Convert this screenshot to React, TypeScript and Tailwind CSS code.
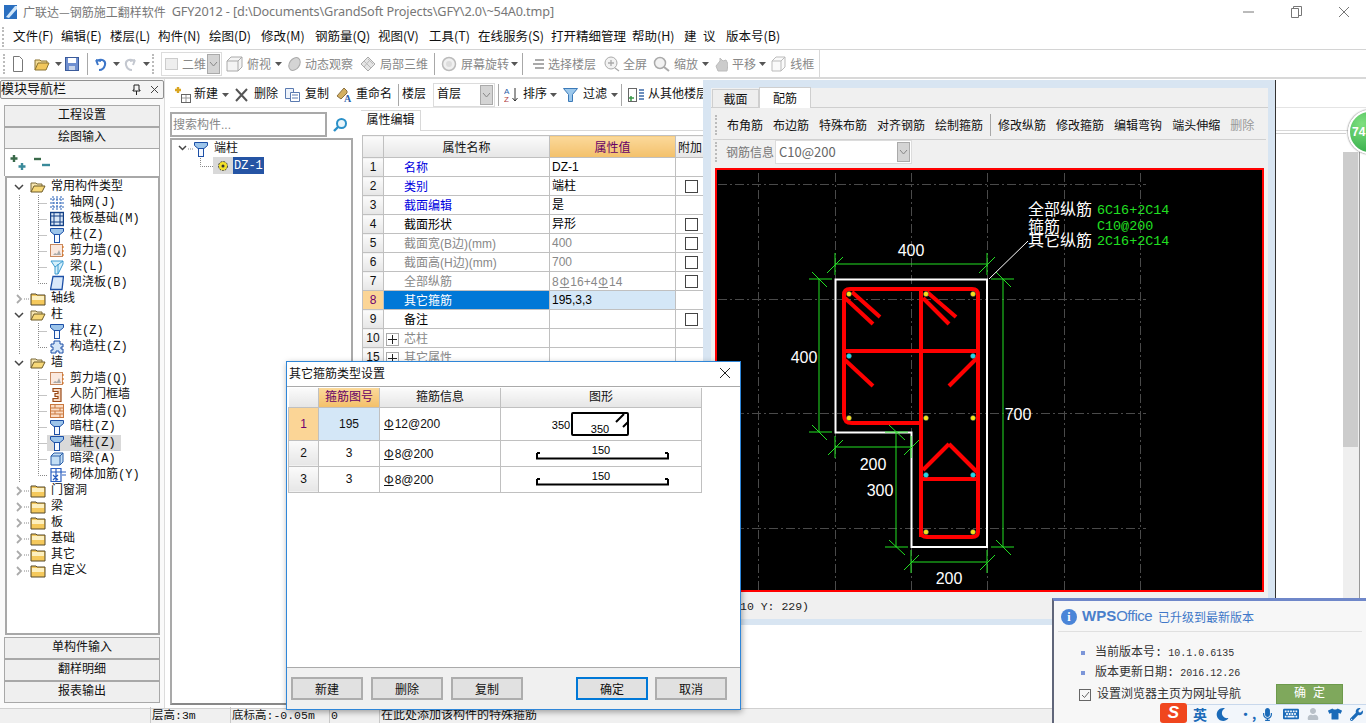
import React from "react";
import { FaMicrophone, FaKeyboard, FaTshirt, FaWrench, FaMoon, FaUser } from "react-icons/fa";

const Caret = ({ className = "" }: { className?: string }) => (
  <svg width="7" height="4" viewBox="0 0 7 4" className={`shrink-0 ${className}`}><path d="M0 0h7L3.5 4z" fill="#555" /></svg>
);
const Div = ({ className = "" }: { className?: string }) => <div className={`w-px h-[22px] bg-[#a8a8a8] shrink-0 ${className}`} />;
const Grip = ({ className = "" }: { className?: string }) => <div className={`w-[2px] h-[20px] shrink-0 border-l-2 border-dotted border-[#bbb] ${className}`} />;
const Txt = ({ className = "", children }: { className?: string; children: React.ReactNode }) => <span className={`shrink-0 whitespace-nowrap ${className}`}>{children}</span>;

const GIcon = ({ w = 16, className = "", children }: { w?: number; className?: string; children: React.ReactNode }) => (
  <svg width={w} height="16" viewBox={`0 0 ${w} 16`} className={`shrink-0 ${className}`}>{children}</svg>
);

const Combo = ({ className = "", w, text, textClass = "", icon }: { className?: string; w: string; text: string; textClass?: string; icon?: React.ReactNode }) => (
  <div className={`${w} h-[24px] shrink-0 flex items-center border border-[#dcdcdc] bg-white pl-[3px] pr-px ${className}`}>
    {icon}
    <span className={`flex-1 whitespace-nowrap ${textClass}`}>{text}</span>
    <div className="w-[13px] h-[20px] bg-[#d4d4d4] border border-[#aaa] flex items-center justify-center">
      <svg width="9" height="6" viewBox="0 0 9 6"><path d="M1 1l3.5 4L8 1" fill="none" stroke="#888" /></svg>
    </div>
  </div>
);

const Column = () => (
  <GIcon w={14}>
    <path d="M.5 1.5h13v3l-3.5 3h-6l-3.5-3z" fill="#9cc4ea" stroke="#1c4fa6" />
    <rect x="4.5" y="7.5" width="5" height="8" fill="#f4f8ff" stroke="#1c4fa6" />
  </GIcon>
);
const FolderOpen = () => (
  <GIcon w={16}>
    <path d="M1 13V4h5l1 1h5v2" fill="#f6e5b0" stroke="#7a6a3a" />
    <path d="M1 13l3-6h11l-3 6z" fill="#f7d878" stroke="#6d5a28" />
  </GIcon>
);
const FolderClosed = () => (
  <GIcon w={16}>
    <path d="M1 14V3h5l1 1h8v10z" fill="#f5c95c" stroke="#55482a" />
    <rect x="2" y="5" width="12" height="4" fill="#fdf0c0" />
  </GIcon>
);
const WallI = () => (
  <GIcon w={14}>
    <rect x=".5" y="1.5" width="12" height="12" fill="#fbe9df" stroke="#c98a60" />
    <path d="M3 12l2-2 2 1 2-4 2 5z" fill="#aaa" />
    <path d="M13 3v2M13 7v2M13 11v2" stroke="#d56a10" />
  </GIcon>
);
const GridI = () => (
  <GIcon w={14}>
    <path d="M3 1v14M7 1v14M11 1v14M0 4h14M0 8h14M0 12h14" stroke="#2a62b8" strokeDasharray="2 1" />
  </GIcon>
);
const RaftI = () => (
  <GIcon w={14}>
    <rect x=".5" y="1.5" width="13" height="13" fill="#dbe8f6" stroke="#123f85" strokeWidth="1.4" />
    <path d="M4 2v12M10 2v12M1 5h12M1 11h12" stroke="#123f85" />
  </GIcon>
);
const BeamI = () => (
  <GIcon w={14}>
    <path d="M1 2h12v3l-5 10H5V8z" fill="#d5f0fb" stroke="#3b9ad0" />
    <path d="M5 8l8-6M8 15V5" stroke="#3b9ad0" />
  </GIcon>
);
const SlabI = () => (
  <GIcon w={14}>
    <path d="M3 1.5h10.500l-1.500 13H.5z" fill="#d8e8fa" stroke="#1c4fa6" strokeWidth="1.3" />
  </GIcon>
);
const PuzzleI = () => (
  <GIcon w={14}>
    <path d="M1 5h3V2h6v3h3v3h-2v2h2v4H9v-2H6v2H1v-3h2V8H1z" fill="#d5e6f8" stroke="#1c4fa6" />
  </GIcon>
);
const FrameI = () => (
  <GIcon w={14}>
    <path d="M3 1.500h8v13H3v-3h5v-2H5v-3h3v-2H3z" fill="#f7d9c3" stroke="#9a4a18" strokeWidth="1.2" />
  </GIcon>
);
const BrickI = () => (
  <GIcon w={14}>
    <rect x=".5" y="1.500" width="13" height="13" fill="#fbdcc4" stroke="#c9783f" />
    <path d="M1 5h12M1 8h12M1 11h12M5 2v3M10 5v3M5 8v3M10 11v3" stroke="#c9783f" />
  </GIcon>
);
const HiddenBeamI = () => (
  <GIcon w={14}>
    <path d="M1 5l3-3h9v9l-3 3H1z" fill="#c4dff5" stroke="#2a5ea8" />
    <path d="M1 5h9v9M10 5l3-3" fill="none" stroke="#2a5ea8" />
  </GIcon>
);
const MasonryI = () => (
  <GIcon w={16}>
    <path d="M1 1.500h10v13H1zM1 5h15M6 1v14M12 8h4M3 8l5 5M8 8l-5 5" fill="none" stroke="#2a5ec0" strokeWidth="1.200" />
  </GIcon>
);

type TreeRow = { t: "f"; label: string; open?: boolean } | { t: "c"; label: string; icon: React.ReactNode; last?: boolean; hl?: boolean };

const rows: TreeRow[] = [
  { t: "f", label: "常用构件类型", open: true },
  { t: "c", label: "轴网(J)", icon: <GridI /> },
  { t: "c", label: "筏板基础(M)", icon: <RaftI /> },
  { t: "c", label: "柱(Z)", icon: <Column /> },
  { t: "c", label: "剪力墙(Q)", icon: <WallI /> },
  { t: "c", label: "梁(L)", icon: <BeamI /> },
  { t: "c", label: "现浇板(B)", icon: <SlabI />, last: true },
  { t: "f", label: "轴线" },
  { t: "f", label: "柱", open: true },
  { t: "c", label: "柱(Z)", icon: <Column /> },
  { t: "c", label: "构造柱(Z)", icon: <PuzzleI />, last: true },
  { t: "f", label: "墙", open: true },
  { t: "c", label: "剪力墙(Q)", icon: <WallI /> },
  { t: "c", label: "人防门框墙", icon: <FrameI /> },
  { t: "c", label: "砌体墙(Q)", icon: <BrickI /> },
  { t: "c", label: "暗柱(Z)", icon: <Column /> },
  { t: "c", label: "端柱(Z)", icon: <Column />, hl: true },
  { t: "c", label: "暗梁(A)", icon: <HiddenBeamI /> },
  { t: "c", label: "砌体加筋(Y)", icon: <MasonryI />, last: true },
  { t: "f", label: "门窗洞" },
  { t: "f", label: "梁" },
  { t: "f", label: "板" },
  { t: "f", label: "基础" },
  { t: "f", label: "其它" },
  { t: "f", label: "自定义" },
];

const Dots = "#888";
const FolderOpenOrClosed = ({ open }: { open: boolean }) => (open ? <FolderOpen /> : <FolderClosed />);
const NavTree = () => (
  <div className="flex-1 ml-[1px] border-2 border-[#a8a8a8] bg-white pt-[1px] pl-[1px] overflow-hidden">
    {rows.map((r, i) =>
      r.t === "f" ? (
        <div key={i} className="h-4 flex items-center">
          <svg width="22" height="16" viewBox="0 0 22 16" className="shrink-0">
            {r.open ? (
              <path d="M7 6l4 4 4-4" fill="none" stroke="#444" strokeWidth="1.500" />
            ) : (
              <>
                <path d="M9 4l4 4-4 4" fill="none" stroke="#aaa" strokeWidth="1.800" />
                <path d="M16 8h6" stroke={Dots} strokeDasharray="1 1" />
              </>
            )}
          </svg>
          <FolderOpenOrClosed open={!!r.open} />
          <span className="ml-[5px] whitespace-nowrap">{r.label}</span>
        </div>
      ) : (
        <div key={i} className="h-4 flex items-center">
          <svg width="39" height="16" viewBox="0 0 39 16" className="shrink-0">
            <path d="M11.500 0v16" stroke={Dots} strokeDasharray="1 1" />
            <path d={r.last ? "M30.500 0v8.500H39" : "M30.500 0v16M30.500 8.500H39"} fill="none" stroke={Dots} strokeDasharray="1 1" />
          </svg>
          <div className={`flex items-center h-4 pl-[3px] pr-[5px] ${r.hl ? "bg-[#d9d9d9]" : ""}`}>
            <span className="w-[16px] flex shrink-0">{r.icon}</span>
            <span className="ml-[4px] whitespace-nowrap">{r.label}</span>
          </div>
        </div>
      )
    )}
  </div>
);

const NavBtn = ({ children }: { children: React.ReactNode }) => (
  <div className="h-[22px] shrink-0 flex items-center justify-center bg-[#efefef] border border-[#a8a8a8] text-[12px]">{children}</div>
);

const Top = () => (
  <>
    <div className="h-[24px] flex items-center pl-[3px] text-[13px] text-[#777] shrink-0">
      <svg width="16" height="16" viewBox="0 0 16 16" className="shrink-0 mr-1">
        <rect x="1" y="1" width="13" height="14" fill="#2a6fc0" />
        <path d="M3 13L12 2h2v3l-8 9z" fill="#cfe6fa" />
      </svg>
      <span className="text-[12px] whitespace-nowrap">广联达—钢筋施工翻样软件</span>
      <span className="ml-[6px] whitespace-nowrap [font-family:'Noto_Sans',sans-serif] text-[12.7px] tracking-[-0.15px]">GFY2012 - [d:\Documents\GrandSoft Projects\GFY\2.0\~54A0.tmp]</span>
      <div className="ml-auto flex items-center">
        <svg width="12" height="2" viewBox="0 0 12 2" className="mr-[36px]"><path d="M0 1h11" stroke="#777" /></svg>
        <svg width="11" height="12" viewBox="0 0 11 12" className="mr-[36px]"><path d="M.5 2.500h7v9h-7zM2.500 2.500v-2h8v9h-3" fill="none" stroke="#777" /></svg>
        <svg width="12" height="12" viewBox="0 0 12 12" className="mr-[16px]"><path d="M1 1l10 10M11 1L1 11" stroke="#777" /></svg>
      </div>
    </div>
    <div className="h-[26px] flex items-center border-b border-[#d4d4d4] text-[12.5px] text-[#111] shrink-0">
      <Grip className="ml-[2px] h-[14px]" />
      <Txt className="ml-[9px] w-[48px]">文件(F)</Txt>
      <Txt className="w-[49px]">编辑(E)</Txt>
      <Txt className="w-[48px]">楼层(L)</Txt>
      <Txt className="w-[51px]">构件(N)</Txt>
      <Txt className="w-[52px]">绘图(D)</Txt>
      <Txt className="w-[54px]">修改(M)</Txt>
      <Txt className="w-[63px]">钢筋量(Q)</Txt>
      <Txt className="w-[51px]">视图(V)</Txt>
      <Txt className="w-[49px]">工具(T)</Txt>
      <Txt className="w-[73px]">在线服务(S)</Txt>
      <Txt className="w-[81px]">打开精细管理</Txt>
      <Txt className="w-[52px]">帮助(H)</Txt>
      <Txt className="w-[19px]">建</Txt>
      <Txt className="w-[23px]">议</Txt>
      <Txt>版本号(B)</Txt>
    </div>
    <div className="h-[29px] flex items-center border-b-2 border-[#d8d8d8] text-[12px] text-[#888] shrink-0">
      <Grip className="ml-[3px]" />
      <GIcon w={12} className="ml-[7px]"><path d="M1.500.5h6l3 3v12h-9z" fill="#fff" stroke="#777" /></GIcon>
      <GIcon w={16} className="ml-[10px]"><path d="M1 14V4h5l1 1h6v2" fill="#f3dc98" stroke="#8a7330" /><path d="M1 14l3-7h11l-3 7z" fill="#f2c75c" stroke="#8a7330" /></GIcon>
      <Caret className="ml-[5px]" />
      <GIcon w={14} className="ml-[3px]"><rect x=".5" y="1.500" width="13" height="13" fill="#6f8fd0" stroke="#3a5a9a" /><rect x="3" y="2" width="8" height="5" fill="#fff" /><rect x="4" y="10" width="6" height="4" fill="#c8d4ea" /></GIcon>
      <Div className="ml-[8px]" />
      <GIcon w={13} className="ml-[6px]"><path d="M2 4l2 5M2 4l5 1M3 5c5-3 9 0 8 4s-4 5-6 5" fill="none" stroke="#3d76c8" strokeWidth="2" /></GIcon>
      <Caret className="ml-[6px]" />
      <GIcon w={13} className="ml-[4px]"><path d="M11 4L9 9M11 4L6 5M10 5c-5-3-9 0-8 4s4 5 6 5" fill="none" stroke="#c4c8d0" strokeWidth="2" /></GIcon>
      <Caret className="ml-[6px]" />
      <Grip className="ml-[2px]" />
      <Combo className="ml-[7px]" w="w-[61px]" text="二维" textClass="ml-[4px]" icon={<span className="w-[13px] h-[12px] bg-[#eee] border border-[#ccc]" />} />
      <GIcon w={17} className="ml-[4px]"><path d="M1 5l4-4h11v10l-4 4H1z" fill="#f4f4f4" stroke="#aaa" /><path d="M1 5h11v10M12 5l4-4" fill="none" stroke="#aaa" /></GIcon>
      <Txt className="ml-[4px]">俯视</Txt>
      <Caret className="ml-[4px]" />
      <GIcon w={17} className="ml-[4px]"><ellipse cx="8.500" cy="8" rx="5" ry="7" transform="rotate(35 8.500 8)" fill="#d4d4d4" stroke="#aaa" /></GIcon>
      <Txt className="ml-[2px]">动态观察</Txt>
      <GIcon w={17} className="ml-[7px]"><path d="M8 1l7 7-7 7-7-7z" fill="#e4e4e4" stroke="#aaa" /><path d="M4 5l7 7M8 3l5 5M4 11l5-6" stroke="#bbb" /></GIcon>
      <Txt className="ml-[3px]">局部三维</Txt>
      <Div className="ml-[6px]" />
      <GIcon w={16} className="ml-[6px]"><circle cx="8" cy="8" r="6.500" fill="#f0f0f0" stroke="#bbb" strokeWidth="1.500" /><circle cx="8" cy="8" r="3" fill="#ddd" /></GIcon>
      <Txt className="ml-[4px]">屏幕旋转</Txt>
      <Caret className="ml-[2px]" />
      <Div className="ml-[4px]" />
      <GIcon w={13} className="ml-[9px]"><path d="M3 4h9M1 8h11M3 12h9" stroke="#aaa" strokeWidth="2" /></GIcon>
      <Txt className="ml-[3px]">选择楼层</Txt>
      <GIcon w={17} className="ml-[7px]"><circle cx="8" cy="7" r="6" fill="#f2f2f2" stroke="#aaa" /><path d="M8 4v6M5 7h6M12 12l4 3" stroke="#aaa" strokeWidth="1.300" /></GIcon>
      <Txt className="ml-[3px]">全屏</Txt>
      <GIcon w={17} className="ml-[6px]"><circle cx="7" cy="7" r="5.500" fill="#f2f2f2" stroke="#aaa" strokeWidth="1.500" /><path d="M11 11l5 4" stroke="#aaa" strokeWidth="2" /></GIcon>
      <Txt className="ml-[4px]">缩放</Txt>
      <Caret className="ml-[4px]" />
      <GIcon w={14} className="ml-[5px]"><path d="M2 10l4-5V2l3 3 3-1 2 4-1 7H4z" fill="#ccc" stroke="#bbb" /></GIcon>
      <Txt className="ml-[4px]">平移</Txt>
      <Caret className="ml-[3px]" />
      <GIcon w={15} className="ml-[5px]"><path d="M1 5l4-4h9v10l-4 4H1zM1 5h9v10M10 5l4-4" fill="#fafafa" stroke="#bbb" /></GIcon>
      <Txt className="ml-[4px]">线框</Txt>
      <div className="w-px h-full bg-[#d8d8d8] ml-[5px]" />
    </div>
  </>
);

const LeftPanel = () => (
  <div className="w-[165px] shrink-0 flex flex-col bg-[#fafafa] border-r border-[#dcdcdc] pb-[5px]">
    <div className="h-[19px] mt-[1px] flex items-center border border-[#909090] rounded-[2px] bg-[#f4f4f4] text-[13px] text-[#111]">
      <span className="flex-1 whitespace-nowrap">模块导航栏</span>
      <svg width="9" height="11" viewBox="0 0 9 11" className="mr-[9px]"><path d="M2 1h5v5h1v1H1V6h1zM4.500 7v4" fill="none" stroke="#222" /></svg>
      <svg width="9" height="9" viewBox="0 0 9 9" className="mr-[4px]"><path d="M1 1l7 7M8 1L1 8" stroke="#444" /></svg>
    </div>
    <div className="flex-1 flex flex-col mt-[6px] mx-[4px] min-h-0">
      <NavBtn>工程设置</NavBtn>
      <NavBtn>绘图输入</NavBtn>
      <div className="h-[27px] shrink-0 flex items-center bg-white border-x border-[#a8a8a8] pl-[5px] gap-[5px]">
        <svg width="18" height="17" viewBox="0 0 18 17"><path d="M4 1v7M.5 4.500h7" stroke="#3a6a4a" strokeWidth="2.400" /><path d="M12 9v7M8.500 12.500h7" stroke="#3a8a9a" strokeWidth="2.400" /></svg>
        <svg width="18" height="17" viewBox="0 0 18 17"><path d="M1 5h7" stroke="#3a6a4a" strokeWidth="2.400" /><path d="M9 11h8" stroke="#3a8a9a" strokeWidth="2.400" /></svg>
      </div>
      <NavTree />
      <div className="h-[2px] shrink-0" />
      <NavBtn>单构件输入</NavBtn>
      <NavBtn>翻样明细</NavBtn>
      <NavBtn>报表输出</NavBtn>
    </div>
  </div>
);

const Mid = () => (
  <div className="flex-1 flex flex-col min-w-0 pl-[5px]">
    <div className="h-[29px] pt-[3px] flex items-center shrink-0 text-[12px] text-[#111] border-b border-[#e4e4e4]">
      <GIcon w={17} className="ml-[4px]"><path d="M4 0v6M1 3h6" stroke="#d9a520" strokeWidth="2.400" /><rect x="7.500" y="7.500" width="9" height="8" fill="#fff" stroke="#666" /><path d="M8 11h8M12 8v7" stroke="#999" /></GIcon>
      <Txt className="ml-[3px]">新建</Txt>
      <Caret className="ml-[4px]" />
      <GIcon w={13} className="ml-[6px]"><path d="M1 2l11 12M12 2L1 14" stroke="#555" strokeWidth="2" /></GIcon>
      <Txt className="ml-[6px]">删除</Txt>
      <GIcon w={15} className="ml-[7px]"><path d="M.5 1.500h8v10h-8z" fill="#eef3fb" stroke="#5a7ab0" /><path d="M5.500 5.500h9v9h-9z" fill="#fff" stroke="#5a7ab0" /><path d="M7 8h6M7 11h6" stroke="#5a7ab0" /></GIcon>
      <Txt className="ml-[5px]">复制</Txt>
      <GIcon w={16} className="ml-[7px]"><path d="M1 9l7-8 3 3v2L5 12z" fill="#d4b060" stroke="#8a7040" /><text x="8" y="15" fontSize="10" fontWeight="bold" fill="#2a5ea8" fontFamily="Liberation Serif, serif">A</text></GIcon>
      <Txt className="ml-[4px]">重命名</Txt>
      <Div className="ml-[6px]" />
      <Txt className="ml-[3px]">楼层</Txt>
      <Combo className="ml-[7px]" w="w-[62px]" text="首层" />
      <Div className="ml-[3px]" />
      <GIcon w={14} className="ml-[5px]"><text x="0" y="7" fontSize="8" fill="#2a5ea8" fontFamily="Liberation Sans, sans-serif">A</text><text x="0" y="15" fontSize="8" fill="#b04040" fontFamily="Liberation Sans, sans-serif">Z</text><path d="M11 1v13M8.500 11l2.500 3 2.500-3" fill="none" stroke="#333" /></GIcon>
      <Txt className="ml-[5px]">排序</Txt>
      <Caret className="ml-[3px]" />
      <GIcon w={15} className="ml-[6px]"><path d="M.5 1.500h14l-5 6v7h-4v-7z" fill="#9cc8ec" stroke="#3c7ab8" /></GIcon>
      <Txt className="ml-[5px]">过滤</Txt>
      <Caret className="ml-[4px]" />
      <Div className="ml-[3px]" />
      <GIcon w={17} className="ml-[6px]"><rect x=".5" y="1.500" width="8" height="13" fill="#fff" stroke="#666" /><path d="M11 3h5M11 6h5M11 9h5M11 12h5" stroke="#3c6aa8" strokeWidth="1.500" /><path d="M3 9v5M1 11h5" stroke="#3a9a4a" strokeWidth="1.500" /></GIcon>
      <Txt className="ml-[3px]">从其他楼层</Txt>
    </div>
    <div className="flex-1 flex min-h-0">
      <div className="w-[183px] shrink-0 flex flex-col pb-[3px]">
        <div className="h-[27px] shrink-0 flex items-center mt-[3px]">
          <div className="w-[157px] h-[25px] border-2 border-[#a9a9a9] bg-white flex items-center pl-[1px] text-[12px] text-[#888] [font-family:'Liberation_Sans','Noto_Sans_CJK_SC',sans-serif]"><span className="whitespace-nowrap">搜索构件...</span></div>
          <svg width="16" height="16" viewBox="0 0 16 16" className="ml-[5px]"><circle cx="9.500" cy="6.500" r="4.500" fill="#e8f5fb" stroke="#2a90c8" strokeWidth="2" /><path d="M6 10l-4 4" stroke="#2a90c8" strokeWidth="2.400" /></svg>
        </div>
        <div className="flex-1 border-2 border-[#a9a9a9] border-b-[#888] bg-white pt-[1px] text-[12px] [font-family:'Liberation_Mono','Noto_Sans_CJK_SC',monospace]">
          <div className="h-[16px] flex items-center">
            <svg width="22" height="16" viewBox="0 0 22 16" className="shrink-0"><path d="M7 5l3.500 3.500L14 5" fill="none" stroke="#444" strokeWidth="1.500" /><path d="M16 8h6" stroke={Dots} strokeDasharray="1 1" /></svg>
            <Column />
            <span className="ml-[6px]">端柱</span>
          </div>
          <div className="h-[17px] flex items-center">
            <svg width="41" height="16" viewBox="0 0 41 16" className="shrink-0"><path d="M28.500 0v8.500H41" fill="none" stroke={Dots} strokeDasharray="1 1" /></svg>
            <span className="w-[20px] h-[17px] bg-[#d9d9d9] flex items-center justify-center">
              <svg width="12" height="12" viewBox="0 0 12 12"><circle cx="6" cy="6" r="4.500" fill="#f2e02a" stroke="#444" strokeDasharray="2 1" /><circle cx="6" cy="6" r="1.500" fill="#333" /></svg>
            </span>
            <span className="h-[17px] px-[1px] bg-[#2554a4] text-white flex items-center">DZ-1</span>
          </div>
        </div>
      </div>
      <div className="flex-1 min-w-0 pl-[8px]">
        <div className="h-[21px] mt-[2px] flex items-end border-b border-[#d8d8d8]">
          <div className="h-[21px] w-[60px] border-r border-t border-[#d8d8d8] bg-white text-[12px] flex items-center justify-center mb-[-1px] text-[#111]">属性编辑</div>
        </div>
        <PropTable />
      </div>
    </div>
  </div>
);

const Rebar = () => <span className="underline decoration-1 mx-[1px] [font-family:'Noto_Sans_CJK_SC',sans-serif]">Φ</span>;

type P = { n: number; name: string; val: React.ReactNode; nameC: string; valC?: string; cb?: boolean; plus?: boolean; sel?: boolean };
const props: P[] = [
  { n: 1, name: "名称", val: "DZ-1", nameC: "text-[#0000e0]" },
  { n: 2, name: "类别", val: "端柱", nameC: "text-[#0000e0]", cb: true },
  { n: 3, name: "截面编辑", val: "是", nameC: "text-[#0000e0]" },
  { n: 4, name: "截面形状", val: "异形", nameC: "text-black", cb: true },
  { n: 5, name: "截面宽(B边)(mm)", val: "400", nameC: "text-[#888]", valC: "text-[#888]", cb: true },
  { n: 6, name: "截面高(H边)(mm)", val: "700", nameC: "text-[#888]", valC: "text-[#888]", cb: true },
  { n: 7, name: "全部纵筋", val: <>8<Rebar />16+4<Rebar />14</>, nameC: "text-[#888]", valC: "text-[#888]", cb: true },
  { n: 8, name: "其它箍筋", val: "195,3,3", nameC: "text-white", sel: true },
  { n: 9, name: "备注", val: "", nameC: "text-black", cb: true },
  { n: 10, name: "芯柱", val: "", nameC: "text-[#888]", plus: true },
  { n: 15, name: "其它属性", val: "", nameC: "text-[#888]", plus: true },
];
const cell = "border border-[#c0c0c0] p-0";
const hdr = "bg-gradient-to-b from-[#fbfbfb] to-[#e6e6e6]";
const PropTable = () => (
  <table className="mt-[4px] ml-[1px] table-fixed border-collapse w-[341px] text-[12px] leading-[16px] [font-family:'Liberation_Sans','Noto_Sans_CJK_SC',sans-serif]">
    <colgroup><col className="w-[21px]" /><col className="w-[166px]" /><col className="w-[126px]" /><col className="w-[28px]" /></colgroup>
    <thead>
      <tr className="h-[22px] [font-family:'Noto_Sans_CJK_SC',sans-serif]">
        <th className={`${cell} ${hdr}`} />
        <th className={`${cell} ${hdr} font-normal`}>属性名称</th>
        <th className={`${cell} bg-gradient-to-b from-[#fbd99a] to-[#f3c06a] font-normal text-[#660066]`}>属性值</th>
        <th className={`${cell} ${hdr} font-normal text-left overflow-hidden whitespace-nowrap pl-[2px]`}>附加</th>
      </tr>
    </thead>
    <tbody>
      {props.map((p) => (
        <tr key={p.n} className="h-[19px]">
          <td className={`${cell} text-center ${p.sel ? "bg-[#fbd596] text-[#700070]" : hdr}`}>{p.n}</td>
          <td className={`${cell} ${p.sel ? "bg-[#0078d7]" : "bg-white"} ${p.nameC} whitespace-nowrap`}>
            <div className="flex items-center h-[16px] pt-[2px]">
              {p.plus ? (
                <span className="ml-[2px] mr-[5px] w-[13px] h-[13px] border border-[#aaa] bg-white flex items-center justify-center">
                  <svg width="9" height="9" viewBox="0 0 9 9"><path d="M4.500 0v9M0 4.500h9" stroke="#222" /></svg>
                </span>
              ) : (
                <span className="w-[20px] shrink-0" />
              )}
              {p.name}
            </div>
          </td>
          <td className={`${cell} pl-[2px] ${p.sel ? "bg-[#d4e7f7]" : "bg-white"} ${p.valC ?? "text-black"} whitespace-nowrap`}>{p.val}</td>
          <td className={`${cell} bg-white`}>
            {p.cb && <div className="ml-[9px] w-[13px] h-[13px] border border-[#444] bg-white" />}
          </td>
        </tr>
      ))}
    </tbody>
  </table>
);

const Status = () => (
  <div className="h-[15px] shrink-0 flex items-center bg-[#f0f0f0] border-t border-[#d0d0d0] text-[11.5px] text-[#111] [font-family:'Liberation_Mono','Noto_Sans_CJK_SC',monospace]">
    <span className="w-[150px] shrink-0 h-full" />
    <span className="w-[80px] shrink-0 border-l border-[#c8c8c8] pl-px whitespace-nowrap">层高:3m</span>
    <span className="w-[99px] shrink-0 border-l border-[#c8c8c8] pl-px whitespace-nowrap">底标高:-0.05m</span>
    <span className="w-[50px] shrink-0 border-l border-[#c8c8c8] pl-px">0</span>
    <span className="border-l border-[#c8c8c8] pl-px whitespace-nowrap text-[12px]">在此处添加该构件的特殊箍筋</span>
  </div>
);

const G = "#22e022";
const gl: number[][] = [
  [835, 264, 987, 264], [835, 253, 835, 275], [987, 253, 987, 275], [827, 273, 843, 257], [979, 273, 995, 257],
  [819, 279, 819, 432], [809, 279, 832, 279], [812, 272, 827, 287], [809, 432, 832, 432], [812, 425, 827, 440],
  [1003, 279, 1003, 547], [991, 279, 1014, 279], [996, 272, 1011, 287], [991, 547, 1014, 547], [996, 540, 1011, 555],
  [835, 447, 911, 447], [835, 436, 835, 458], [911, 436, 911, 458], [828, 455, 843, 440], [904, 455, 919, 440],
  [896, 432, 896, 547], [885, 432, 908, 432], [889, 425, 905, 440], [885, 547, 908, 547], [889, 540, 905, 555],
  [911, 562, 987, 562], [911, 550, 911, 573], [987, 550, 987, 573], [904, 570, 919, 555], [980, 570, 995, 555],
];
const red: number[][] = [
  [921, 291, 921, 537], [846, 351, 978, 351], [923, 479, 976, 479],
  [923, 470, 949, 444], [949, 444, 977, 472],
  [845, 298, 873, 324], [852, 292, 880, 317], [923, 298, 949, 324], [927, 292, 956, 317],
  [845, 360, 873, 386], [977, 358, 949, 386],
];
const yd = [[849, 294], [926, 294], [973, 294], [849, 418], [926, 418], [973, 418], [926, 532], [973, 532]];
const cd = [[849, 356], [973, 356], [926, 475], [973, 475]];
const vlabels: [number, number, string][] = [[911, 256, "400"], [804, 363, "400"], [1018, 420, "700"], [873, 470, "200"], [880, 496, "300"], [949, 584, "200"]];

const Cad = () => (
  <svg className="w-full h-full block" viewBox="717 170 545 420">
    {[758.5, 835.5, 911.5, 987.5, 1064.5, 1140.5].map((x) => <path key={x} d={`M${x} 173V590`} stroke="#4a4a4a" strokeDasharray="9 3 2 3" />)}
    {[184.5, 299.5, 413.5, 528.5].map((y) => <path key={y} d={`M718 ${y}H1146`} stroke="#4a4a4a" strokeDasharray="9 3 2 3" />)}
    <path d="M835.500 279.500H987V547H911.500V432.500H835.500Z" fill="none" stroke="#fff" strokeWidth="2" />
    {gl.map((l, i) => <line key={i} x1={l[0]} y1={l[1]} x2={l[2]} y2={l[3]} stroke={G} />)}
    <path d="M989 279L1028 241" stroke="#fff" />
    <path d="M850 289H972Q978 289 978 295V532Q978 537 972 537H927Q921 537 921 532V423H852Q844 423 844 415V295Q844 289 850 289Z" fill="none" stroke="#f00" strokeWidth="4" />
    {red.map((l, i) => <line key={i} x1={l[0]} y1={l[1]} x2={l[2]} y2={l[3]} stroke="#f00" strokeWidth="4" />)}
    {yd.map((d, i) => <circle key={i} cx={d[0]} cy={d[1]} r="2.500" fill="#f5e21c" stroke="#555" strokeDasharray="1 1" />)}
    {cd.map((d, i) => <circle key={i} cx={d[0]} cy={d[1]} r="2.500" fill="#22d6e6" stroke="#555" strokeDasharray="1 1" />)}
    <g fill="#fff" fontSize="16" fontFamily="Liberation Sans, sans-serif" textAnchor="middle">
      {vlabels.map((v, i) => <text key={i} x={v[0]} y={v[1]}>{v[2]}</text>)}
    </g>
    <g fill="#fff" fontSize="16" fontFamily="Noto Sans CJK SC, sans-serif">
      <text x="1028" y="215">全部纵筋</text>
      <text x="1028" y="232">箍筋</text>
      <text x="1028" y="246">其它纵筋</text>
    </g>
    <g fill={G} fontSize="13.400" fontFamily="Liberation Mono, monospace">
      <text x="1097" y="214">6C16+2C14</text>
      <text x="1097" y="230">C10@200</text>
      <text x="1097" y="245">2C16+2C14</text>
    </g>
  </svg>
);

const RebarWindow = () => (
  <div className="absolute left-[703px] top-[80px] w-[573px] h-[545px] bg-[#d8e5f2] border-r border-[#333] flex flex-col pt-[8px] pl-[8px] pr-[7px] pb-[6px] text-[12px] text-[#111]">
    <div className="flex-1 bg-[#f0f0f0] flex flex-col">
      <div className="h-[20px] shrink-0 flex items-end border-b border-[#cfcfcf] pl-[1px] text-[12px]">
        <div className="w-[47px] h-[18px] border border-b-0 border-[#cfcfcf] flex items-center justify-center bg-[#eee]">截面</div>
        <div className="w-[52px] h-[21px] mb-[-1px] border-x border-t border-[#cfcfcf] bg-white flex items-center justify-center">配筋</div>
      </div>
      <div className="h-[30px] shrink-0 mt-[2px] mx-[2px] flex items-center bg-[#f0f0f0] border-b border-[#d0d0d0]">
        <Grip className="ml-[2px]" />
        <div className="ml-[10px] flex items-center gap-[10px]">
          <Txt>布角筋</Txt><Txt>布边筋</Txt><Txt>特殊布筋</Txt><Txt>对齐钢筋</Txt><Txt>绘制箍筋</Txt>
          <Div className="mx-[-3px]" />
          <Txt>修改纵筋</Txt><Txt>修改箍筋</Txt><Txt>编辑弯钩</Txt><Txt>端头伸缩</Txt><Txt className="text-[#999]">删除</Txt>
        </div>
      </div>
      <div className="h-[24px] mb-[4px] shrink-0 mx-[2px] flex items-center text-[#777]">
        <Grip className="ml-[2px]" />
        <Txt className="ml-[9px]">钢筋信息</Txt>
        <Combo w="w-[137px]" text="C10@200" className="ml-[1px] border-[#aaa]" textClass="text-[13px] text-[#666]" />
      </div>
      <div className="ml-[4px] w-[549px] h-[424px] shrink-0 border-2 border-[#f00] bg-black overflow-hidden"><Cad /></div>
      <div className="flex-1 flex items-center pl-[29px] pt-[3px] text-[11.5px] bg-[#f0f0f0] text-[#222] [font-family:'Liberation_Mono',monospace]">10 Y: 229)</div>
    </div>
  </div>
);

const BtnD = ({ children, className = "border-[#adadad]" }: { children: React.ReactNode; className?: string }) => (
  <div className={`w-[72px] h-[23px] shrink-0 flex items-center justify-center bg-[#e1e1e1] border-2 text-[12px] text-[#111] ${className}`}>{children}</div>
);

const Dialog = () => (
  <div className="absolute left-[286px] top-[361px] w-[455px] h-[349px] bg-white border border-[#2f86d8] shadow-[1px_2px_6px_rgba(0,0,0,0.35)] flex flex-col text-[12px] text-[#111]">
    <div className="h-[24px] pb-[2px] shrink-0 flex items-center pl-[2px] text-[12px]">
      <span className="whitespace-nowrap">其它箍筋类型设置</span>
      <svg width="12" height="12" viewBox="0 0 12 12" className="ml-auto mr-[9px]"><path d="M1 1l10 10M11 1L1 11" stroke="#222" /></svg>
    </div>
    <div className="flex-1 border-y border-[#aaa] pt-px pl-px">
      <table className="table-fixed border-collapse w-[413px] leading-none [font-family:'Liberation_Sans','Noto_Sans_CJK_SC',sans-serif]">
        <colgroup><col className="w-[30px]" /><col className="w-[61px]" /><col className="w-[121px]" /><col className="w-[201px]" /></colgroup>
        <thead>
          <tr className="h-[19px] text-[12px]">
            <th className={`${hdr}`} />
            <th className="bg-gradient-to-b from-[#fbd99a] to-[#f3c06a] font-normal text-[#660066] border-x border-b border-[#c0c0c0]">箍筋图号</th>
            <th className={`${hdr} font-normal border-x border-b border-[#c0c0c0]`}>箍筋信息</th>
            <th className={`${hdr} font-normal border-x border-b border-[#c0c0c0]`}>图形</th>
          </tr>
        </thead>
        <tbody className="text-center">
          <tr className="h-[33px]">
            <td className={`${cell} bg-[#fbd596] text-[#700070]`}>1</td>
            <td className={`${cell} bg-[#d4e7f7]`}>195</td>
            <td className={`${cell} text-left pl-[3px]`}><Rebar />12@200</td>
            <td className={cell}><Shape1 /></td>
          </tr>
          {[2, 3].map((n) => (
            <tr key={n} className="h-[26px]">
              <td className={`${cell} ${hdr}`}>{n}</td>
              <td className={cell}>3</td>
              <td className={`${cell} text-left pl-[3px]`}><Rebar />8@200</td>
              <td className={cell}><Shape2 /></td>
            </tr>
          ))}
        </tbody>
      </table>
    </div>
    <div className="h-[41px] shrink-0 bg-[#f0f0f0] flex items-center pl-[4px]">
      <BtnD>新建</BtnD>
      <BtnD className="ml-[8px] border-[#adadad]">删除</BtnD>
      <BtnD className="ml-[8px] border-[#adadad]">复制</BtnD>
      <BtnD className="ml-[53px] border-[#0078d7]">确定</BtnD>
      <BtnD className="ml-[7px] border-[#adadad]">取消</BtnD>
    </div>
  </div>
);
const Shape1 = () => (
  <svg width="200" height="31" viewBox="0 0 200 31" className="block">
    <rect x="71" y="5" width="56" height="22" rx="1" fill="none" stroke="#000" strokeWidth="2" />
    <path d="M115 14l8-8M122 19l5-5" stroke="#000" strokeWidth="2" />
    <g fontSize="11" fontFamily="Liberation Sans, sans-serif" textAnchor="middle" fill="#000">
      <text x="60" y="21">350</text><text x="99" y="25">350</text>
    </g>
  </svg>
);
const Shape2 = () => (
  <svg width="200" height="24" viewBox="0 0 200 24" className="block">
    <path d="M36 12v5.500H167V12" fill="none" stroke="#000" strokeWidth="2" />
    <path d="M36 12h3M167 12h-3" stroke="#000" strokeWidth="2" />
    <text x="100" y="13" fontSize="11" fontFamily="Liberation Sans, sans-serif" textAnchor="middle" fill="#000">150</text>
  </svg>
);

const Wps = () => (
  <div className="absolute left-[1052px] top-[598px] w-[314px] h-[125px] bg-[#f7f7f7] border-l-2 border-[#60667a] border-t-[3px] border-t-[#6f87c9] text-[12px] text-[#333]">
    <div className="h-[30px] mx-[4px] flex items-center border-b border-[#e0e0e0] mt-px">
      <span className="ml-[3px] w-[16px] h-[16px] rounded-full bg-[#4a85d8] text-white text-[12px] font-bold flex items-center justify-center [font-family:'Liberation_Serif',serif]">i</span>
      <span className="ml-[5px] text-[15px] font-bold text-[#4a7fcb] [font-family:'Liberation_Sans',sans-serif]">WPS</span>
      <span className="text-[15px] text-[#4a7fcb] tracking-[-0.5px] [font-family:'Liberation_Sans',sans-serif]">Office</span>
      <span className="ml-[6px] text-[#3f77c8] whitespace-nowrap text-[12px]">已升级到最新版本</span>
    </div>
    <div className="pl-[27px] pt-[11px] [font-family:'Liberation_Mono','Noto_Sans_CJK_SC',monospace]">
      <div className="h-[20px] flex items-center"><span className="w-[4px] h-[4px] bg-[#7c96d8] mr-[10px]" />当前版本号:<span className="ml-[6px] text-[10px]">10.1.0.6135</span></div>
      <div className="h-[20px] flex items-center"><span className="w-[4px] h-[4px] bg-[#7c96d8] mr-[10px]" />版本更新日期:<span className="ml-[6px] text-[10px]">2016.12.26</span></div>
      <div className="h-[24px] flex items-center ml-[-2px]">
        <span className="w-[12px] h-[12px] border border-[#666] flex items-center justify-center mr-[6px]">
          <svg width="9" height="8" viewBox="0 0 9 8"><path d="M1 4l2.500 2.500L8 1" fill="none" stroke="#666" /></svg>
        </span>
        <span className="whitespace-nowrap">设置浏览器主页为网址导航</span>
        <span className="ml-[35px] mt-[-2px] w-[67px] h-[20px] bg-[#7fa85c] border border-[#6d9a4c] text-white flex items-center justify-center">确 定</span>
      </div>
    </div>
  </div>
);

const Ime = () => (
  <div className="absolute left-[1160px] top-[703px] w-[206px] h-[20px] flex items-center">
    <div className="w-[27px] h-[20px] bg-[#f0461e] rounded-[3px] text-white font-bold italic text-[17px] flex items-center justify-center [font-family:'Liberation_Sans',sans-serif] shrink-0">S</div>
    <div className="flex-1 h-[19px] mt-px bg-[#f2f6fb] border-t border-[#c8d8ec] flex items-center text-[#1a6ab8] pl-[6px]">
      <span className="font-bold text-[14px] w-[23px]">英</span>
      <FaMoon size={13} className="mr-[10px]" />
      <span className="w-[22px] text-[13px] font-bold leading-[10px]">·,</span>
      <FaMicrophone size={13} className="mr-[9px]" />
      <FaKeyboard size={16} className="mr-[8px]" />
      <FaUser size={12} className="text-[#b8c0c8] mr-[9px]" />
      <FaTshirt size={14} className="mr-[8px]" />
      <FaWrench size={13} />
    </div>
  </div>
);

export default function App() {
  return (
    <div className="relative w-[1366px] h-[723px] overflow-hidden bg-white flex flex-col text-[12px] text-[#111] [font-family:'Noto_Sans_CJK_SC',sans-serif]">
      <Top />
      <div className="flex-1 flex min-h-0 text-[12px] [font-family:'Liberation_Mono','Noto_Sans_CJK_SC',monospace]">
        <LeftPanel />
        <Mid />
      </div>
      <Status />

      <RebarWindow />
      <div className="absolute left-[1276px] top-[133px] w-[70px] h-px bg-[#d0d0d0]" />
      <div className="absolute left-[1343px] top-[152px] w-[17px] h-[446px] bg-[#efefef] border-r border-[#999]">
        <div className="w-[15px] h-[295px] bg-[#cccccc]" />
      </div>
      <div className="absolute left-[1348px] top-[110px] w-[44px] h-[44px] rounded-full border-2 border-white bg-[radial-gradient(circle_at_30%_30%,#7fe07f,#1f9e3a)] shadow-[0_0_2px_#333] pl-[2px] flex items-center text-white font-bold text-[12px] [font-family:'Liberation_Sans',sans-serif]">74</div>
      <Dialog />
      <Wps />
      <Ime />
    </div>
  );
}
